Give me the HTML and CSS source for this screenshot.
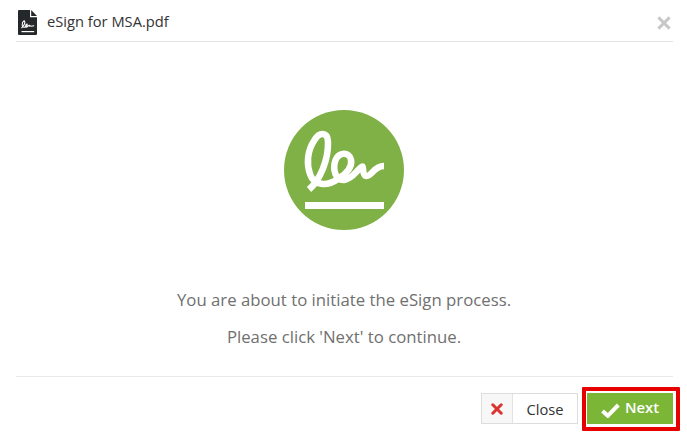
FILE: index.html
```html
<!DOCTYPE html>
<html lang="en">
<head>
  <meta charset="UTF-8">
  <meta name="viewport" content="width=device-width, initial-scale=1.0">
  <title>eSign for MSA.pdf</title>
  <link rel="stylesheet" href="styles.css">
</head>
<body>
  <div class="dialog">
    <header class="dialog-header">
      <svg class="file-icon" viewBox="0 0 20 26">
        <path d="M1 0h11v7.200h7V24a1 1 0 0 1-1 1H1a1 1 0 0 1-1-1V1a1 1 0 0 1 1-1z" fill="#25282a"/>
        <path d="M13.200 0L19 6h-5.800z" fill="#25282a"/>
        <path d="M3.500 18C6 15.500 7.300 12.500 6.500 11C5 10.200 3.200 15 4.800 16.900C6.500 18 9.800 15.500 9.200 14.200C8 13.300 6.800 17.200 8.500 17.200C10 17.200 10.500 15 11.300 15.200C11.500 17.200 12.500 15.400 13 16C13.500 16.600 14.500 15.800 16.200 15.700" fill="none" stroke="#fff" stroke-width="1.100"/>
        <path d="M3.500 21.600h12.700" stroke="#fff" stroke-width="1.200"/>
      </svg>
      <h2 class="title">eSign for MSA.pdf</h2>
      <button class="dismiss" type="button" aria-label="Dismiss">
        <svg viewBox="0 0 14 14"><path d="M1.400 1.400l11.200 11.200M12.600 1.400L1.400 12.600" stroke="#c8c8c8" stroke-width="3" fill="none"/></svg>
      </button>
    </header>

    <main class="dialog-body">
      <svg class="logo" viewBox="0 0 120 120">
        <circle cx="60" cy="60" r="60" fill="#80b147"/>
        <path d="M25 79.500C36 70 44.500 50 44 32C43.500 21.500 35.500 22 30.500 30C23 41 22.500 54 26 64C30 76 43 76.500 54 69C62 64 68.500 57 67 49.500C65 41.500 55 42 51.500 50C48 60 52 70.500 60 70C69 69 73.500 58.500 78.500 56.500C79.500 59 78.500 66 82.500 66C88 66 90 56 100 56" fill="none" stroke="#fff" stroke-width="6.500" stroke-linejoin="round"/>
        <path d="M21 95.500h79" stroke="#fff" stroke-width="7"/>
      </svg>
      <p>You are about to initiate the eSign process.</p>
      <p>Please click 'Next' to continue.</p>
    </main>

    <footer class="dialog-footer">
      <button class="btn-close" type="button">
        <span class="btn-icon">
          <svg viewBox="0 0 12 12"><path d="M1.800 1.800l8.400 8.400M10.200 1.800l-8.400 8.400" stroke="#db3330" stroke-width="3" stroke-linecap="round" fill="none"/></svg>
        </span>
        <span class="btn-label">Close</span>
      </button>
      <div class="highlight">
        <button class="btn-next" type="button">
          <svg viewBox="0 0 19 15"><path d="M1.500 8l5.300 4.800L17.300 2" stroke="#fff" stroke-width="4" fill="none"/></svg>
          <span>Next</span>
        </button>
      </div>
    </footer>
  </div>
</body>
</html>
```
FILE: styles.css
```css
* { box-sizing: border-box; }
body {
  margin: 0;
  height: 441px;
  overflow: hidden;
  background: #fff;
  font-family: "Open Sans", sans-serif;
}
button {
  font-family: inherit;
  padding: 0;
  border: 0;
  background: none;
}
svg { display: block; }
.dialog {
  display: flex;
  flex-direction: column;
  height: 441px;
  padding-left: 16px;
}
.dialog-header {
  display: flex;
  align-items: flex-start;
  width: 657px;
  height: 42px;
  padding: 10px 2px 0 2px;
  border-bottom: 1px solid #e3e3e3;
}
.file-icon { width: 20px; height: 26px; }
.title {
  flex: 1;
  margin: 0 0 0 9px;
  font-size: 14.7px;
  font-weight: 400;
  line-height: 23px;
  color: #333;
}
.dismiss { margin-top: 6px; }
.dismiss svg { width: 14px; height: 14px; }
.dialog-body {
  display: flex;
  flex-direction: column;
  align-items: center;
  width: 657px;
  height: 335px;
  padding: 68px 1px 0 0;
  border-bottom: 1px solid #e8e8e8;
  font-size: 16.75px;
  color: #707070;
}
.logo {
  width: 120px;
  height: 120px;
  margin-bottom: 58px;
}
.dialog-body p {
  margin: 0 0 13px;
  line-height: 24px;
  white-space: nowrap;
}
.dialog-footer {
  display: flex;
  justify-content: flex-end;
  align-items: center;
  gap: 4px;
  height: 63px;
  padding: 0 7px 0 0;
}
.btn-close {
  display: flex;
  width: 97px;
  height: 31px;
  border: 1px solid #ddd;
}
.btn-icon {
  display: flex;
  align-items: center;
  justify-content: center;
  width: 31px;
  height: 29px;
  background: #f7f7f7;
  border-right: 1px solid #e3e3e3;
}
.btn-icon svg { width: 12px; height: 12px; }
.btn-label {
  flex: 1;
  font-size: 14.7px;
  line-height: 30px;
  color: #333;
}
.highlight {
  width: 98px;
  height: 44px;
  padding: 2px 2px 2px 1px;
  border: 4px solid #e60000;
  border-radius: 1px;
}
.btn-next {
  display: flex;
  align-items: flex-start;
  width: 86px;
  height: 31px;
  padding-left: 14px;
  background: #7cb637;
  color: #fff;
  font-size: 14.8px;
  font-weight: 600;
  line-height: 28px;
}
.btn-next svg {
  width: 19px;
  height: 15px;
  margin: 10px 5px 0 0;
}
```
